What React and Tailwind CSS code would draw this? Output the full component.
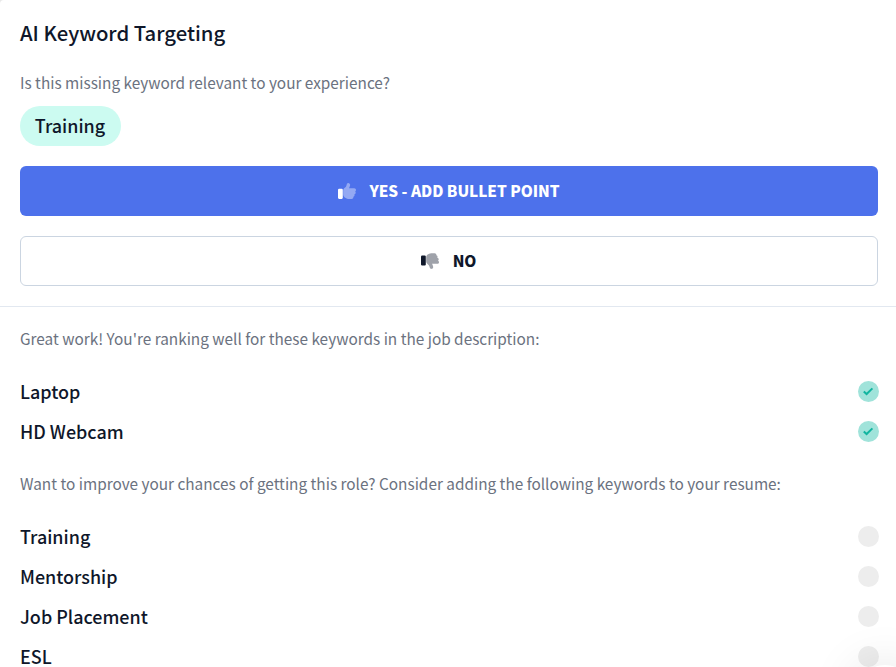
const matchedKeywords = ["Laptop", "HD Webcam"];
const suggestedKeywords = ["Training", "Mentorship", "Job Placement", "ESL"];

function ThumbIcon({ down = false }) {
  return (
    <svg
      viewBox="0 0 512 512"
      fill="currentColor"
      className={down ? "size-[18px] -scale-y-100" : "size-[18px]"}
    >
      <path
        opacity="0.4"
        transform="translate(-18 0) scale(1.035 1)"
        d="M313.4 32.9c26 5.2 42.9 30.5 37.7 56.5l-2.3 11.4c-5.3 26.7-15.1 52.1-28.8 75.2H464c26.5 0 48 21.5 48 48c0 18.5-10.5 34.6-25.9 42.6C497 275.4 504 288.9 504 304c0 23.4-16.8 42.9-38.9 47.1c4.4 7.3 6.9 15.8 6.9 24.9c0 21.3-13.9 39.4-33.1 45.6c.7 3.3 1.1 6.8 1.1 10.4c0 26.5-21.5 48-48 48H294.5c-19 0-37.5-5.6-53.3-16.1l-38.5-25.7C176 420.4 160 390.4 160 358.3V247.1c0-29.2 13.3-56.7 36-75l7.4-5.9c26.5-21.2 44.6-51 51.2-84.2l2.3-11.4c5.2-26 30.5-42.9 56.5-37.7z"
      />
      {down ? (
        <rect y="128" width="136" height="288" rx="32" />
      ) : (
        <rect y="192" width="136" height="288" rx="32" />
      )}
    </svg>
  );
}

function KeywordRow({ name, matched = false }) {
  return (
    <li className="flex h-10 items-center justify-between">
      <span className="mb-0.5 text-[17.95px] leading-6 font-medium">{name}</span>
      {matched ? (
        <span className="mb-0.5 flex size-[21px] items-center justify-center rounded-full bg-[#a0e3da]">
          <svg viewBox="0 0 12 12" className="size-3" fill="none" stroke="#12b5a0" strokeWidth="2">
            <path d="M1.8 6.4l2.8 2.6 5.8-5.6" />
          </svg>
        </span>
      ) : (
        <span className="mb-0.5 size-[21px] rounded-full bg-[#ededed]" />
      )}
    </li>
  );
}

export default function App() {
  return (
    <div className="relative h-[667px] overflow-hidden bg-[#e8e8e8] font-['Noto_Sans_CJK_SC',sans-serif] text-[#0f172a]">
      <main className="h-full rounded-tl-[4px] bg-white">
        <section className="h-[307px] border-b border-[#e2e8f0] pt-4 pr-[18px] pl-5">
          <h1 className="text-[20.3px] leading-8 font-medium">AI Keyword Targeting</h1>
          <p className="mt-[22px] text-[15.35px] leading-6 text-[#6b7280]">
            Is this missing keyword relevant to your experience?
          </p>
          <div className="mt-3 flex h-10 w-[101px] items-center justify-center rounded-full bg-[#ccfbf1] pr-px pb-0.5 text-[17.95px] font-medium">
            Training
          </div>
          <button className="mt-5 flex h-[50px] w-full items-center justify-center gap-[13px] rounded-md bg-[#4d71eb] text-[15.35px] font-black tracking-[-0.04px] text-white">
            <ThumbIcon />
            YES - ADD BULLET POINT
          </button>
          <button className="mt-5 flex h-[50px] w-full items-center justify-center gap-3.5 rounded-md border border-[#cbd5e1] pr-px text-[15.35px] font-black tracking-[-0.04px]">
            <ThumbIcon down />
            NO
          </button>
        </section>
        <section className="pt-[19px] pr-[17.5px] pl-5 text-[#6b7280]">
          <p className="text-[15.35px] leading-6">
            Great work! You're ranking well for these keywords in the job description:
          </p>
          <ul className="mt-[22px] text-[#0f172a]">
            {matchedKeywords.map((name) => (
              <KeywordRow key={name} name={name} matched />
            ))}
          </ul>
          <p className="mt-[19px] text-[15.35px] leading-6">
            Want to improve your chances of getting this role? Consider adding the following keywords to your resume:
          </p>
          <ul className="mt-[22px] text-[#0f172a]">
            {suggestedKeywords.map((name) => (
              <KeywordRow key={name} name={name} />
            ))}
          </ul>
        </section>
      </main>
      {/* top of the chat launcher, mostly below the fold */}
      <div className="absolute top-[665px] left-[855px] size-[60px] rounded-full bg-white shadow-[0_0_50px_rgba(0,0,0,0.12)]" />
    </div>
  );
}
